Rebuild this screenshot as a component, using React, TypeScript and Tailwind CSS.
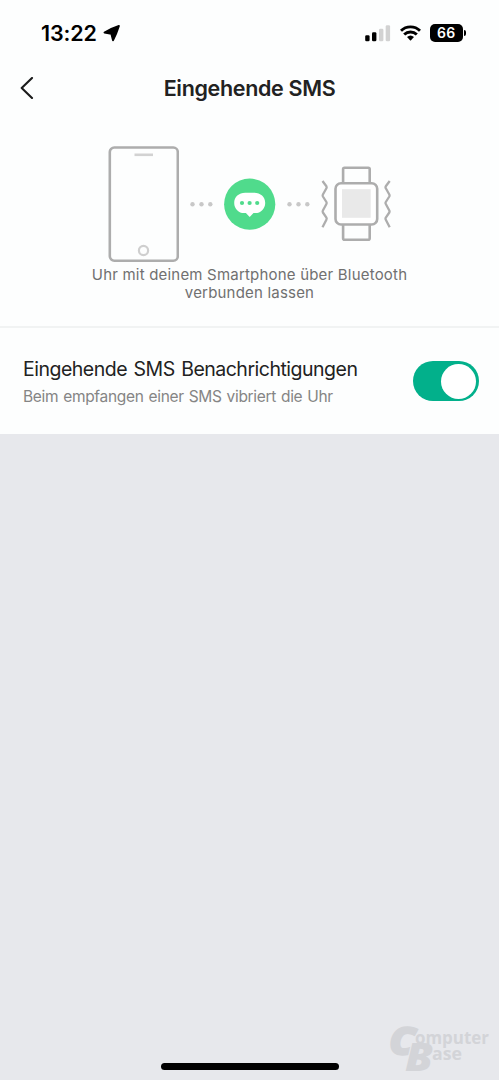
import { useState } from 'react'

function StatusBar() {
  return (
    <div className="flex h-[66px] items-center justify-between pl-[41px] pr-[33.5px]">
      <div className="flex items-center gap-[6px]">
        <span className="text-[21.5px] font-semibold leading-6 tracking-[-0.1px] text-black">13:22</span>
        <svg width="18" height="18" viewBox="0 0 18 18">
          <path
            d="M15.900 1.900Q8 4.500 1.500 8.500L8.400 9.900 10 16.300Q13.500 9.500 15.900 1.900Z"
            fill="#000"
            stroke="#000"
            strokeWidth="1.900"
            strokeLinejoin="round"
          />
        </svg>
      </div>

      <div className="flex items-center">
        <svg width="26" height="17" viewBox="0 0 26 17">
          <rect x="0.200" y="10.200" width="4.400" height="6" rx="1.300" fill="#000" />
          <rect x="7" y="7.200" width="4.400" height="9" rx="1.300" fill="#000" />
          <rect x="14" y="3.700" width="4.400" height="12.500" rx="1.300" fill="#d2d2d2" />
          <rect x="20.700" y="0.200" width="4.400" height="16" rx="1.300" fill="#d2d2d2" />
        </svg>
        <svg width="21" height="16" viewBox="0 0 21 16" className="ml-[9px]">
          <g fill="none" stroke="#000" strokeWidth="2.900">
            <path d="M1 5.700a13.600 13.600 0 0 1 19 0" />
            <path d="M4.200 9.600a8.900 8.900 0 0 1 12.600 0" />
          </g>
          <path d="M7 12a5.200 5.200 0 0 1 7 0l-3 3.300a.7.7 0 0 1-1 0Z" fill="#000" />
        </svg>
        <div className="ml-[9px] flex h-[18px] w-[32.5px] items-center justify-center rounded-[5px] bg-black">
          <span className="text-[14px] font-semibold leading-none tracking-[0.3px] text-white">66</span>
        </div>
        <div className="ml-px h-[6px] w-[2px] rounded-r-full bg-black" />
      </div>
    </div>
  )
}

function NavBar() {
  return (
    <header className="grid h-11 grid-cols-[60px_1fr_60px] items-center">
      <button type="button" aria-label="Zurück" className="pl-5">
        <svg width="14" height="22" viewBox="0 0 14 22" fill="none">
          <path d="M12 1 1.700 11 12 21" stroke="#1b1b1b" strokeWidth="2.100" strokeLinecap="round" strokeLinejoin="round" />
        </svg>
      </button>
      <h1 className="whitespace-nowrap text-center text-[21.5px] font-semibold tracking-[-0.33px] text-[#222]">
        Eingehende SMS
      </h1>
    </header>
  )
}

function Dots() {
  return (
    <svg width="23" height="6" viewBox="0 0 23 6" fill="#c8c8c8">
      <circle cx="2.500" cy="3.200" r="2.200" />
      <circle cx="11.500" cy="3.200" r="2.200" />
      <circle cx="20.300" cy="3.200" r="2.200" />
    </svg>
  )
}

function PhoneDrawing() {
  return (
    <svg width="71" height="116" viewBox="0 0 71 116" fill="none">
      <rect x="1.800" y="1.500" width="68" height="113.200" rx="4.500" stroke="#adadad" strokeWidth="2.600" />
      <path d="M26.500 8.800h18.500" stroke="#d2d2d2" strokeWidth="2.600" />
      <circle cx="35.500" cy="104.500" r="4.600" stroke="#cfcfcf" strokeWidth="2.200" />
    </svg>
  )
}

function MessageBubble() {
  return (
    <svg width="52" height="52" viewBox="0 0 52 52">
      <circle cx="25.700" cy="26.200" r="25.600" fill="#50db8c" />
      <path
        d="M21.200 14.700h9c6.300 0 11 4.200 11 10.200s-4.700 10.200-9.700 10.200h-2L25.700 39l-3.800-3.900h-2c-5 0-9.700-4.200-9.700-10.200s4.700-10.200 11-10.200Z"
        fill="#fff"
      />
      <g fill="#50db8c">
        <circle cx="18" cy="25" r="2.100" />
        <circle cx="25.600" cy="25" r="2.100" />
        <circle cx="33.200" cy="25" r="2.100" />
      </g>
    </svg>
  )
}

function WatchDrawing() {
  return (
    <svg width="70" height="76" viewBox="0 0 70 76" fill="none" stroke="#adadad" strokeWidth="2.600">
      <rect x="22.100" y="1.700" width="26.600" height="72" rx="1.500" />
      <rect x="14.500" y="17.300" width="41.700" height="41.200" rx="5.500" fill="#fff" />
      <rect x="21" y="23.200" width="28.700" height="28.600" fill="#e9e9e9" stroke="none" />
      <g strokeWidth="2.300" strokeLinejoin="round">
        <path d="M1.500 15 5.400 20.300q.6 1 0 2L1.900 28.500q-.5 1 0 2L5.400 36q.6 1 0 2L1.900 44.500q-.5 1 0 2l3.500 5.200q.6 1 0 2L1.500 61.300" />
        <path d="M68.700 15 64.800 20.300q-.6 1 0 2l3.500 6.200q.5 1 0 2L64.800 36q-.6 1 0 2l3.500 6.500q.5 1 0 2l-3.500 5.200q-.6 1 0 2l3.900 7.600" />
      </g>
    </svg>
  )
}

function ConnectionHint() {
  return (
    <section className="h-[218px] border-b-2 border-[#f1f3f3] pt-9">
      <div className="flex items-center justify-center gap-[11px]">
        <PhoneDrawing />
        <Dots />
        <MessageBubble />
        <Dots />
        <WatchDrawing />
      </div>
      <p className="mt-[4px] text-center text-[15px] leading-[18px] tracking-[0.2px] text-[#707070]">
        Uhr mit deinem Smartphone über Bluetooth
        <br />
        verbunden lassen
      </p>
    </section>
  )
}

function NotificationRow() {
  const [enabled, setEnabled] = useState(true)

  return (
    <section className="flex h-[106px] items-center justify-between pl-[23px] pr-[20.5px]">
      <div className="whitespace-nowrap pt-[3px]">
        <h2 className="text-[19.5px] leading-7 tracking-[-0.5px] text-[#222] [word-spacing:1.5px]">
          Eingehende SMS Benachrichtigungen
        </h2>
        <p className="text-[15.5px] leading-7 tracking-[-0.3px] text-[#858585] [word-spacing:0.8px]">
          Beim empfangen einer SMS vibriert die Uhr
        </p>
      </div>
      <button
        type="button"
        role="switch"
        aria-checked={enabled}
        aria-label="Eingehende SMS Benachrichtigungen"
        onClick={() => setEnabled(!enabled)}
        className={`flex h-10 w-[65.5px] items-center rounded-full px-[2.5px] ${
          enabled ? 'justify-end bg-[#02b08b]' : 'justify-start bg-[#d8d8d8]'
        }`}
      >
        <span className="size-[35px] rounded-full bg-white" />
      </button>
    </section>
  )
}

function Watermark() {
  return (
    <svg
      width="114"
      height="66"
      viewBox="0 0 114 66"
      className="absolute bottom-0 right-0 overflow-visible"
      fill="#d3d4d8"
      fontFamily="'Open Sans', 'Noto Sans', sans-serif"
      fontWeight="700"
    >
      <g fontSize="39" fontStyle="italic" fontWeight="800">
        <text x="4" y="41" textLength="27" lengthAdjust="spacingAndGlyphs" stroke="#d3d4d8" strokeWidth="1.500">
          C
        </text>
        <text
          x="20"
          y="56.500"
          textLength="28"
          lengthAdjust="spacingAndGlyphs"
          stroke="#e7e8ec"
          strokeWidth="2"
          paintOrder="stroke"
        >
          B
        </text>
      </g>
      <text x="30" y="30" fontSize="18.500" textLength="74" lengthAdjust="spacingAndGlyphs">
        omputer
      </text>
      <text x="47" y="46" fontSize="18.500" textLength="30" lengthAdjust="spacingAndGlyphs">
        ase
      </text>
    </svg>
  )
}

export default function App() {
  return (
    <div className="relative flex h-[1080px] w-[499px] flex-col overflow-hidden bg-[#e7e8ec] font-['Inter',sans-serif]">
      <div className="bg-[#fdfefe]">
        <StatusBar />
        <NavBar />
        <ConnectionHint />
        <NotificationRow />
      </div>
      <div className="mt-auto flex h-[17px] justify-center">
        <div className="h-[7px] w-[178px] rounded-full bg-black" />
      </div>
      <Watermark />
    </div>
  )
}
